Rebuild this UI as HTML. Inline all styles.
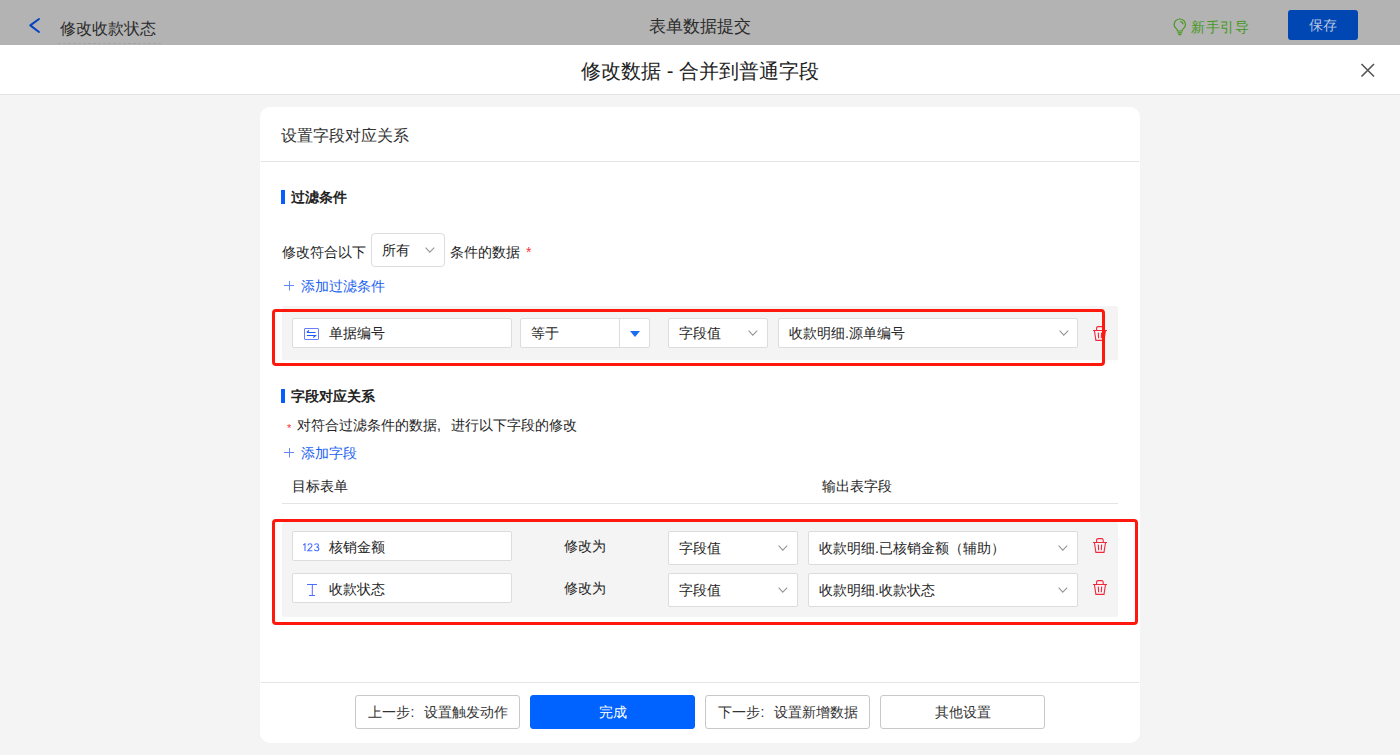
<!DOCTYPE html>
<html><head><meta charset="utf-8">
<style>
*{box-sizing:border-box;margin:0;padding:0}
html,body{width:1400px;height:755px;overflow:hidden;background:#f4f4f4;font-family:"Liberation Sans",sans-serif;color:#242424}
.abs{position:absolute}
.t{position:absolute;white-space:nowrap;line-height:1}
#topbar{left:0;top:0;width:1400px;height:45px;background:#b3b3b3}
#mhead{left:0;top:45px;width:1400px;height:50px;background:#fff;border-bottom:1px solid #e3e3e3}
#card{left:260px;top:107px;width:880px;height:636px;background:#fff;border-radius:10px}
.hline{position:absolute;height:1px;background:#e4e4e4}
.bar{position:absolute;width:4px;background:#0b5cff}
.inp{position:absolute;background:#fff;border:1px solid #dcdcdc;border-radius:2px}
.chev{position:absolute;width:7px;height:7px;border-right:1.3px solid #888;border-bottom:1.3px solid #888;transform:rotate(45deg)}
.btn{position:absolute;border:1px solid #c8c8c8;border-radius:3px;background:#fff;font-size:14px;color:#333;text-align:center;line-height:32px}
.blue{color:#1a62f0}
.red{position:absolute;border:3px solid #ff180c;border-radius:4px}
.gray{position:absolute;background:#f4f4f4;border-radius:2px}
</style></head><body>
<div id="topbar" class="abs">
  <svg class="abs" style="left:28px;top:16px" width="14" height="18" viewBox="0 0 14 18"><path d="M11 3 L2.3 9.4 L11 16" fill="none" stroke="#0842c4" stroke-width="2" stroke-linecap="round" stroke-linejoin="round"/></svg>
  <div class="t" style="left:60px;top:21px;font-size:16px;color:#2b2b2b">修改收款状态</div>
  <div class="abs" style="left:58px;top:43px;width:103px;border-top:1px dashed #a3a3a3"></div>
  <div class="t" style="left:649px;top:18px;font-size:17px;color:#2b2b2b">表单数据提交</div>
  <svg class="abs" style="left:1173px;top:18px" width="14" height="19" viewBox="0 0 14 19"><path d="M4.4 13 V12.2 C4.4 10.9 1.1 9.7 1.1 6.7 A5.7 5.7 0 1 1 12.5 6.7 C12.5 9.7 9.2 10.9 9.2 12.2 V13 Z M4.5 14.8 H9.1 M5.4 16.6 H8.2 M7.2 3.5 A3.1 3.1 0 0 1 10 6.3" fill="none" stroke="#46991a" stroke-width="1.2"/></svg>
  <div class="t" style="left:1191px;top:20px;font-size:14px;color:#45991c;letter-spacing:0.5px">新手引导</div>
  <div class="abs" style="left:1288px;top:10px;width:70px;height:30px;background:#0047b3;border-radius:3px;color:#b8c6e0;font-size:14px;text-align:center;line-height:30px">保存</div>
</div>
<div id="mhead" class="abs">
  <div class="t" style="left:0;width:1400px;text-align:center;top:16px;font-size:20px;color:#222">修改数据 - 合并到普通字段</div>
  <svg class="abs" style="left:1360px;top:17px" width="16" height="16" viewBox="0 0 16 16"><path d="M1.5 2 L14 14.5 M14 2 L1.5 14.5" stroke="#555" stroke-width="1.6"/></svg>
</div>
<div id="card" class="abs"></div>

<!-- card header -->
<div class="t" style="left:281px;top:128px;font-size:16px;color:#333">设置字段对应关系</div>
<div class="hline" style="left:261px;top:161px;width:878px"></div>

<!-- section 1 -->
<div class="bar" style="left:281px;top:190px;height:14px"></div>
<div class="t" style="left:291px;top:190px;font-size:14px;font-weight:bold;color:#222">过滤条件</div>

<div class="t" style="left:282px;top:245px;font-size:14px">修改符合以下</div>
<div class="inp" style="left:371px;top:233px;width:74px;height:34px;border-radius:4px"></div>
<div class="t" style="left:382px;top:243px;font-size:14px">所有</div>
<svg class="abs" style="left:425px;top:246.7px" width="10" height="7" viewBox="0 0 10 7"><path d="M0.6 0.7 L4.8 5.1 L9.2 0.7" fill="none" stroke="#959595" stroke-width="1.1"/></svg>
<div class="t" style="left:450px;top:245px;font-size:14px">条件的数据 <span style="color:#f33;margin-left:2px">*</span></div>

<svg class="abs" style="left:284px;top:281px" width="10" height="10" viewBox="0 0 10 10"><path d="M0 4.5 H10 M5.5 0 V9.5" stroke="#6688ff" stroke-width="1"/></svg><div class="t blue" style="left:301px;top:279px;font-size:14px">添加过滤条件</div>

<!-- filter row -->
<div class="gray" style="left:282px;top:306px;width:836px;height:54px"></div>
<div class="inp" style="left:292px;top:318px;width:220px;height:30px"></div>
<svg class="abs" style="left:304px;top:328px" width="16" height="14" viewBox="0 0 16 14"><rect x="0.5" y="0.5" width="14" height="11" rx="0.5" fill="none" stroke="#6a7dff" stroke-width="1"/><path d="M2.8 4.5 H11.5 M2.8 4.5 L5 2.5 M2.8 7.5 H11.5 L9.3 9.5" fill="none" stroke="#1f5cff" stroke-width="1.1"/></svg>
<div class="t" style="left:329px;top:326px;font-size:14px;color:#222">单据编号</div>
<div class="inp" style="left:520px;top:318px;width:130px;height:30px"></div>
<div class="abs" style="left:619px;top:318px;width:1px;height:30px;background:#dcdcdc"></div>
<div class="t" style="left:531px;top:326px;font-size:14px;color:#222">等于</div>
<div class="abs" style="left:629.5px;top:331px;width:0;height:0;border-left:5px solid transparent;border-right:5px solid transparent;border-top:6px solid #1c6cf2"></div>
<div class="inp" style="left:668px;top:318px;width:100px;height:30px"></div>
<div class="t" style="left:679px;top:326px;font-size:14px">字段值</div>
<svg class="abs" style="left:747.5px;top:329.6px" width="10" height="7" viewBox="0 0 10 7"><path d="M0.6 0.7 L4.8 5.1 L9.2 0.7" fill="none" stroke="#959595" stroke-width="1.1"/></svg>
<div class="inp" style="left:778px;top:318px;width:300px;height:30px"></div>
<div class="t" style="left:789px;top:326px;font-size:14px">收款明细.源单编号</div>
<svg class="abs" style="left:1058.5px;top:329.6px" width="10" height="7" viewBox="0 0 10 7"><path d="M0.6 0.7 L4.8 5.1 L9.2 0.7" fill="none" stroke="#959595" stroke-width="1.1"/></svg>
<svg class="abs" style="left:1092px;top:324.5px" width="16" height="17" viewBox="0 0 16 17"><path d="M4.6 5.5 V3.2 Q4.6 1.6 6.2 1.6 H9.6 Q11.2 1.6 11.2 3.2 V5.5 M1 5.5 H15 M2.4 5.5 L3.9 15.4 H12 L13.5 5.5 M6.3 7.6 L6.6 13.3 M9.6 7.6 L9.3 13.3" fill="none" stroke="#f0283c" stroke-width="1.1"/></svg>
<div class="red" style="left:272px;top:309px;width:833px;height:57px"></div>

<!-- section 2 -->
<div class="bar" style="left:281px;top:389px;height:14px"></div>
<div class="t" style="left:291px;top:389px;font-size:14px;font-weight:bold;color:#222">字段对应关系</div>
<div class="t" style="left:287px;top:423px;font-size:11px;color:#f33">*</div><div class="t" style="left:297px;top:418px;font-size:14px">对符合过滤条件的数据<span style="display:inline-block;width:14px;text-align:left">,</span>进行以下字段的修改</div>
<svg class="abs" style="left:284px;top:448px" width="10" height="10" viewBox="0 0 10 10"><path d="M0 4.5 H10 M5.5 0 V9.5" stroke="#6688ff" stroke-width="1"/></svg><div class="t blue" style="left:301px;top:446px;font-size:14px">添加字段</div>
<div class="t" style="left:292px;top:479px;font-size:14px;color:#222">目标表单</div>
<div class="t" style="left:822px;top:479px;font-size:14px;color:#222">输出表字段</div>
<div class="hline" style="left:282px;top:503px;width:836px"></div>

<div class="gray" style="left:282px;top:522px;width:836px;height:95px"></div>
<div class="inp" style="left:292px;top:531px;width:220px;height:30px"></div>
<svg class="abs" style="left:302px;top:542.5px" width="18" height="9" viewBox="0 0 18 9"><path d="M1.2 2 L3 0.8 V7.9 M6 2.4 Q6.1 0.8 8 0.8 Q10 0.8 10 2.5 Q10 3.7 8.2 5 L5.8 7.8 H10.4 M12.6 2.1 Q12.9 0.8 14.6 0.8 Q16.5 0.8 16.5 2.3 Q16.5 4 14.4 4.1 Q16.8 4.2 16.8 5.9 Q16.8 7.8 14.6 7.8 Q12.7 7.8 12.4 6.3" fill="none" stroke="#4a70ff" stroke-width="1.1"/></svg>
<div class="t" style="left:329px;top:540px;font-size:14px;color:#222">核销金额</div>
<div class="t" style="left:564px;top:539px;font-size:14px">修改为</div>
<div class="inp" style="left:668px;top:531px;width:130px;height:34px"></div>
<div class="t" style="left:679px;top:541px;font-size:14px">字段值</div>
<svg class="abs" style="left:777.6px;top:545.2px" width="10" height="7" viewBox="0 0 10 7"><path d="M0.6 0.7 L4.8 5.1 L9.2 0.7" fill="none" stroke="#959595" stroke-width="1.1"/></svg>
<div class="inp" style="left:808px;top:531px;width:270px;height:34px"></div>
<div class="t" style="left:819px;top:541px;font-size:14px">收款明细.已核销金额（辅助）</div>
<svg class="abs" style="left:1057.6px;top:545.2px" width="10" height="7" viewBox="0 0 10 7"><path d="M0.6 0.7 L4.8 5.1 L9.2 0.7" fill="none" stroke="#959595" stroke-width="1.1"/></svg>

<div class="inp" style="left:292px;top:573px;width:220px;height:30px"></div>
<svg class="abs" style="left:306px;top:583px" width="12" height="14" viewBox="0 0 12 14"><path d="M1 1.5 H11 M6.3 1.5 V12 M3 12.5 H9" stroke="#4a6cff" stroke-width="1"/></svg>
<div class="t" style="left:329px;top:582px;font-size:14px;color:#222">收款状态</div>
<div class="t" style="left:564px;top:581px;font-size:14px">修改为</div>
<div class="inp" style="left:668px;top:573px;width:130px;height:34px"></div>
<div class="t" style="left:679px;top:583px;font-size:14px">字段值</div>
<svg class="abs" style="left:777.6px;top:587px" width="10" height="7" viewBox="0 0 10 7"><path d="M0.6 0.7 L4.8 5.1 L9.2 0.7" fill="none" stroke="#959595" stroke-width="1.1"/></svg>
<div class="inp" style="left:808px;top:573px;width:270px;height:34px"></div>
<div class="t" style="left:819px;top:583px;font-size:14px">收款明细.收款状态</div>
<svg class="abs" style="left:1057.6px;top:587px" width="10" height="7" viewBox="0 0 10 7"><path d="M0.6 0.7 L4.8 5.1 L9.2 0.7" fill="none" stroke="#959595" stroke-width="1.1"/></svg>
<svg class="abs" style="left:1092px;top:537px" width="16" height="17" viewBox="0 0 16 17"><path d="M4.6 5.5 V3.2 Q4.6 1.6 6.2 1.6 H9.6 Q11.2 1.6 11.2 3.2 V5.5 M1 5.5 H15 M2.4 5.5 L3.9 15.4 H12 L13.5 5.5 M6.3 7.6 L6.6 13.3 M9.6 7.6 L9.3 13.3" fill="none" stroke="#f0283c" stroke-width="1.1"/></svg>
<svg class="abs" style="left:1092px;top:579px" width="16" height="17" viewBox="0 0 16 17"><path d="M4.6 5.5 V3.2 Q4.6 1.6 6.2 1.6 H9.6 Q11.2 1.6 11.2 3.2 V5.5 M1 5.5 H15 M2.4 5.5 L3.9 15.4 H12 L13.5 5.5 M6.3 7.6 L6.6 13.3 M9.6 7.6 L9.3 13.3" fill="none" stroke="#f0283c" stroke-width="1.1"/></svg>
<div class="red" style="left:272px;top:519px;width:866px;height:106px"></div>

<!-- footer -->
<div class="hline" style="left:261px;top:682px;width:878px"></div>
<div class="btn" style="left:355px;top:695px;width:165px;height:34px">上一步<span style="display:inline-block;width:14px;padding-left:1px;text-align:left">:</span>设置触发动作</div>
<div class="btn" style="left:530px;top:695px;width:165px;height:34px;background:#0062ff;border-color:#0062ff;color:#fff">完成</div>
<div class="btn" style="left:705px;top:695px;width:165px;height:34px">下一步<span style="display:inline-block;width:14px;padding-left:1px;text-align:left">:</span>设置新增数据</div>
<div class="btn" style="left:880px;top:695px;width:165px;height:34px">其他设置</div>
</body></html>
